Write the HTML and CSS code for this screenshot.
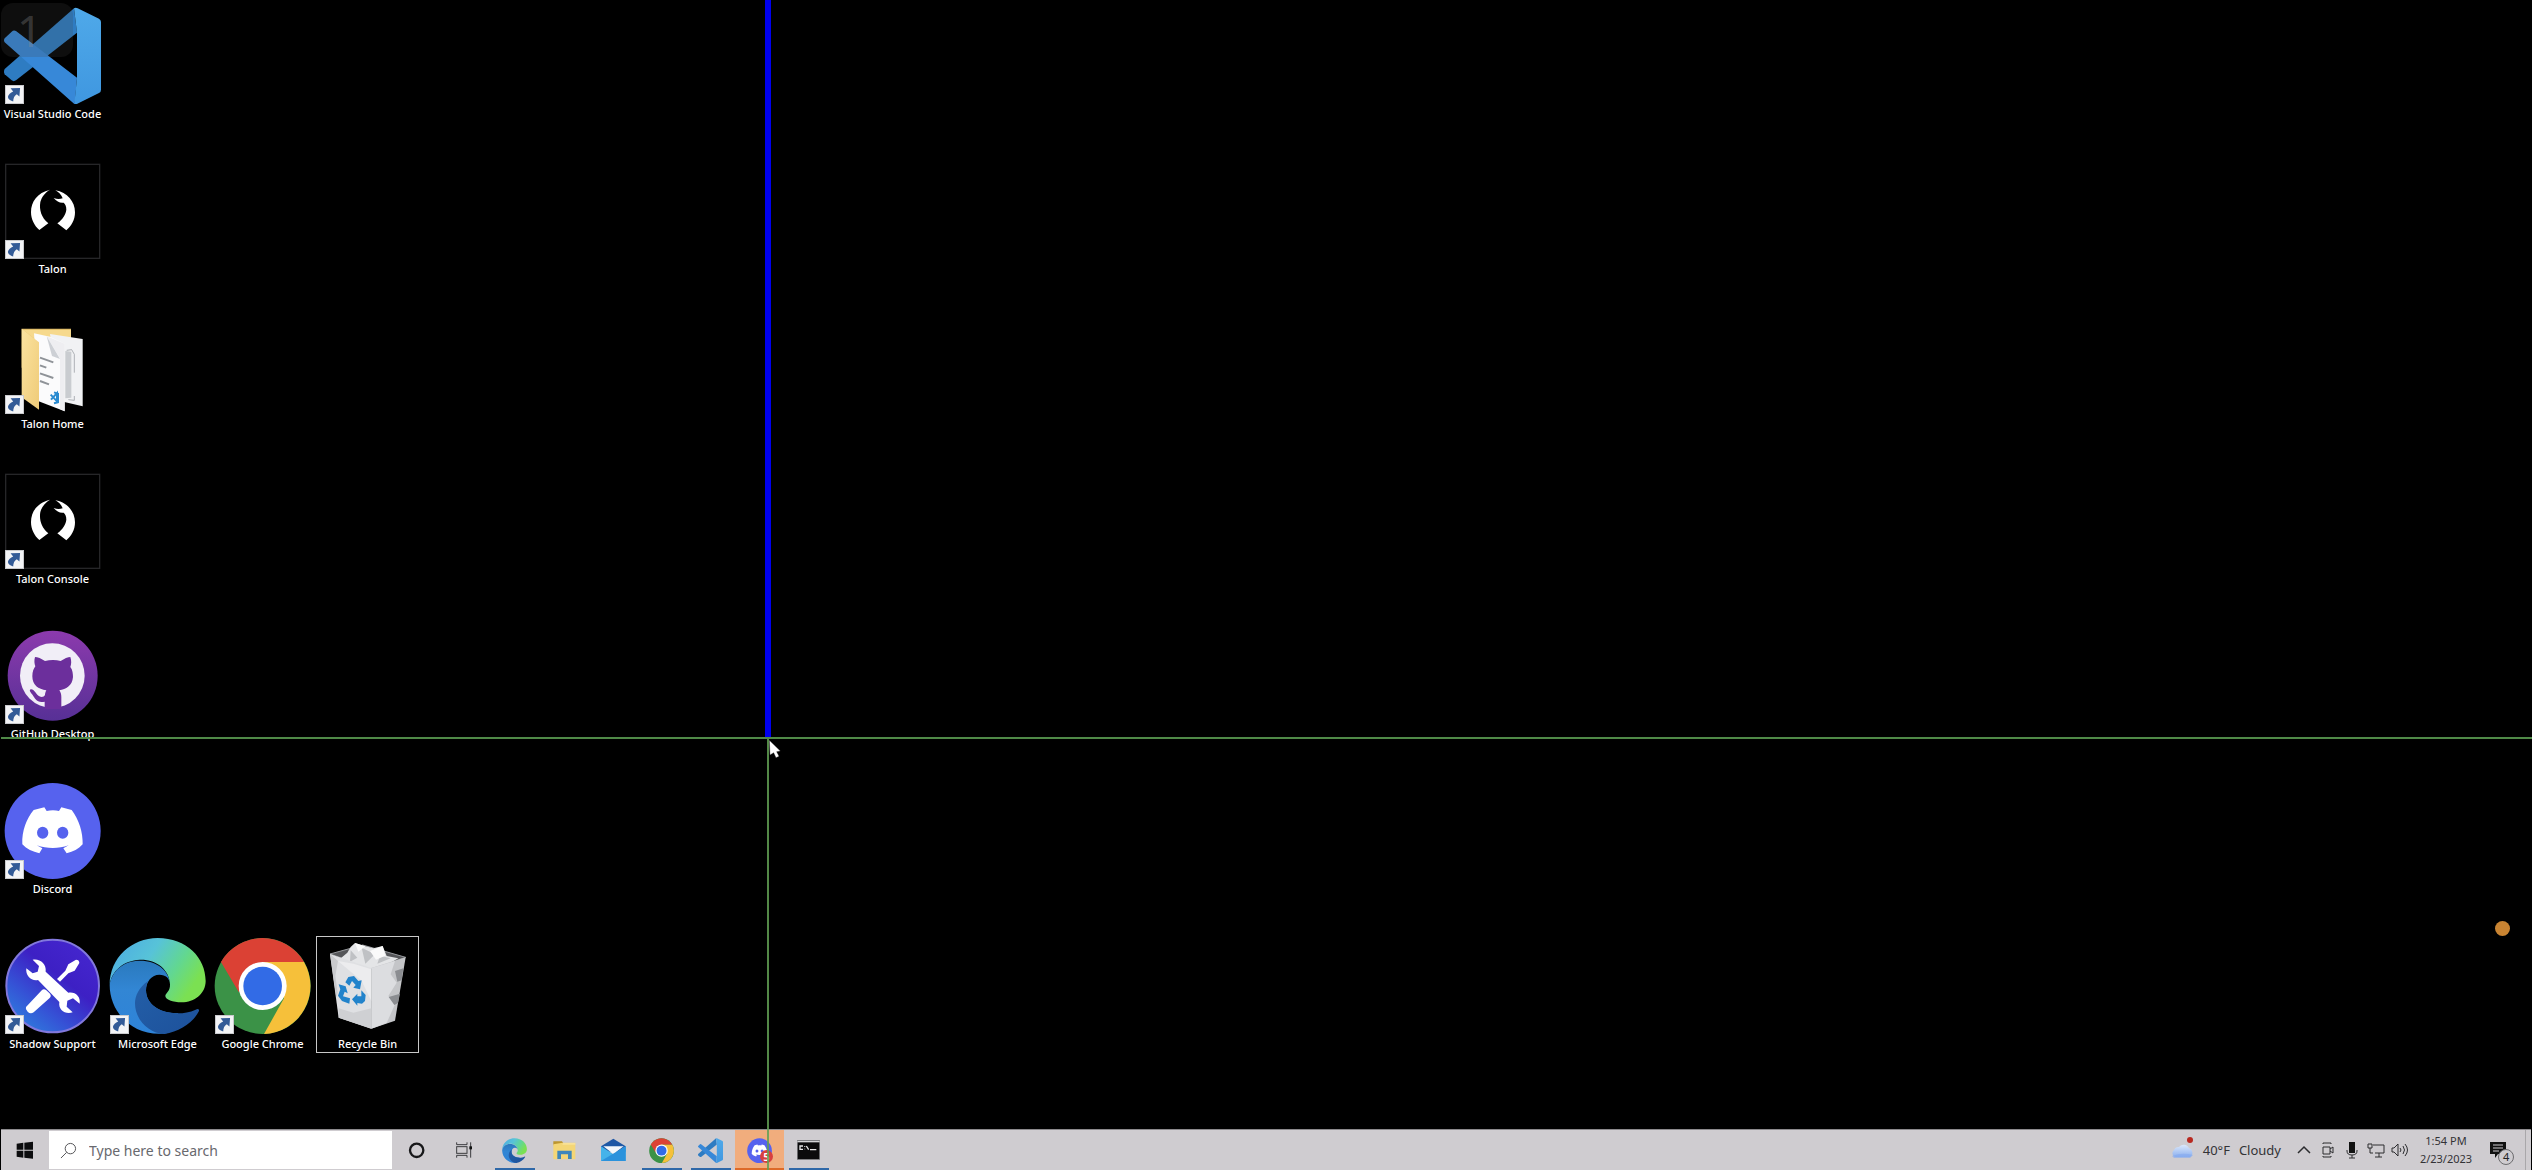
FILE: index.html
```html
<!DOCTYPE html>
<html lang="en">
<head>
<meta charset="utf-8">
<title>Desktop</title>
<link rel="stylesheet" href="styles.css">
</head>
<body>
<svg class="defs" aria-hidden="true">
  <defs>
    <linearGradient id="vsRight" x1="0" y1="0" x2="0" y2="1"><stop offset="0" stop-color="#4fa9e9"/><stop offset="1" stop-color="#3f97e0"/></linearGradient>
    <linearGradient id="edgeTop" x1="0" y1="0" x2="1" y2=".45"><stop offset="0" stop-color="#4ba9e4"/><stop offset=".45" stop-color="#57c3d8"/><stop offset=".75" stop-color="#62d791"/><stop offset="1" stop-color="#7be052"/></linearGradient>
    <linearGradient id="edgeMid" x1="0" y1="0" x2="0" y2="1"><stop offset="0" stop-color="#2a79bd"/><stop offset=".4" stop-color="#3286d4"/><stop offset="1" stop-color="#2e83d8"/></linearGradient>
    <linearGradient id="edgeLow" x1="0" y1="0" x2="1" y2="1"><stop offset="0" stop-color="#235fa8"/><stop offset="1" stop-color="#1d519b"/></linearGradient>
    <linearGradient id="ghBack" x1="0" y1="0" x2="0" y2="1"><stop offset="0" stop-color="#8c3aad"/><stop offset="1" stop-color="#573096"/></linearGradient>
    <linearGradient id="toolBack" x1="0" y1="1" x2=".8" y2="0"><stop offset="0" stop-color="#2c8fe0"/><stop offset=".35" stop-color="#3553d6"/><stop offset=".65" stop-color="#3d20c4"/><stop offset="1" stop-color="#4526cf"/></linearGradient>
    <linearGradient id="cloud" x1="0" y1="0" x2="0" y2="1"><stop offset="0" stop-color="#dbe8fb"/><stop offset="1" stop-color="#8db0ee"/></linearGradient>
    <linearGradient id="folder" x1="0" y1="0" x2="1" y2="1"><stop offset="0" stop-color="#fbe3a0"/><stop offset="1" stop-color="#efcb78"/></linearGradient>
    <symbol id="talon" viewBox="12 483 291 291">
      <rect x="17" y="490" width="282" height="282" fill="#000" stroke="#262628" stroke-width="4"/>
      <path fill="#fff" d="M150 566C112 575 93 602 93 633C93 655 103 674 118 687L145 667C124 650 117 626 121 603C125 587 136 574 150 566Z"/>
      <path fill="#fff" d="M166 568C202 574 225 602 225 634C225 657 214 675 199 688L172 667C188 655 197 642 199 626C199 615 196 609 191 605C181 607 170 602 161 591C172 595 180 594 188 592C184 581 176 574 166 568Z"/>
    </symbol>
    <symbol id="arrow" viewBox="0 0 58 58">
      <rect width="58" height="58" fill="#f3f4f6"/>
      <rect x="1.500" y="1.500" width="55" height="55" fill="none" stroke="#c9cacd" stroke-width="3"/>
      <path fill="#335b97" d="M17 10L46 9L44 35L36 28C29 32 25 40 25 50C14 47 9 42 9 36C10 29 17 24 25 20Z"/>
    </symbol>
    <symbol id="vscode" viewBox="12 18 291 291">
      <path fill="#2e7cc2" d="M14 204L222 22L231 95L48 238Q41 243 35 238L14 220Q10 212 14 204Z"/>
      <path fill="#3788d8" d="M48 90Q41 86 35 92L14 112Q10 118 14 124L224 310L231 230Z"/>
      <path fill="url(#vsRight)" d="M222 22Q227 19 233 22L297 53Q303 57 303 63V266Q303 273 297 276L232 308Q227 311 223 308L231 230V95Z"/>
    </symbol>
    <symbol id="edge" viewBox="327 48 291 291">
      <path fill="url(#edgeTop)" d="M329 192C329 110 395 51 473 51C560 51 617 110 617 180C617 218 583 244 545 244C518 244 496 236 496 225C496 217 511 212 510 190C508 145 470 115 420 116C370 118 335 150 329 192Z"/>
      <path fill="url(#edgeMid)" d="M329 192C335 150 370 119 420 119C472 119 508 150 510 190C509 172 498 161 478 161C455 161 438 182 438 208C438 250 480 279 535 277L500 337C400 350 329 275 329 192Z"/>
      <path fill="url(#edgeLow)" d="M444 180C416 200 405 225 405 247C405 295 445 337 493 339C540 331 580 305 597 270C598 264 593 262 587 266C570 274 550 277 535 277C480 277 438 250 438 208C438 197 440 188 444 180Z"/>
    </symbol>
    <symbol id="chrome" viewBox="642 48 291 291">
      <circle cx="788" cy="195" r="144" fill="#3b9247"/>
      <path fill="#f6c03a" d="M788 123H912A144 144 0 0 1 792 339L852 232Z"/>
      <path fill="#db4134" d="M663 123A144 144 0 0 1 912 123H788L716 213Z"/>
      <circle cx="788" cy="195" r="72" fill="#fff"/>
      <circle cx="788" cy="195" r="58" fill="#326be6"/>
    </symbol>
    <symbol id="discord" viewBox="12 513 291 291">
      <circle cx="158" cy="660" r="144" fill="#5662ee"/>
      <path fill="#fff" d="M101 597L133 589L140 600C152 597 166 597 177 600L184 589L215 597C237 625 249 665 248 700C235 714 220 722 200 727L190 712L206 703C175 714 142 714 110 703L127 712L118 727C98 722 80 714 67 700C65 660 80 622 101 597Z"/>
      <ellipse cx="128" cy="665" rx="17" ry="18" fill="#5662ee"/><ellipse cx="188" cy="665" rx="17" ry="18" fill="#5662ee"/>
    </symbol>
  </defs>
</svg>

<main class="desktop">
  <ul class="icons">
    <li class="c1 r1"><a class="icon" href="#"><span class="pic"><svg><use href="#vscode"/></svg><svg class="shortcut"><use href="#arrow"/></svg></span><span class="name">Visual Studio Code</span></a></li>
    <li class="c1 r2"><a class="icon" href="#"><span class="pic"><svg><use href="#talon"/></svg><svg class="shortcut"><use href="#arrow"/></svg></span><span class="name">Talon</span></a></li>
    <li class="c1 r3"><a class="icon" href="#"><span class="pic">
      <svg viewBox="12 48 291 291">
        <path fill="#e3c06c" d="M65 83H213V200H65Z"/>
        <path fill="#f6d98d" d="M70 87H213V110H100Z"/>
        <path fill="#f1f2f4" d="M150 99L248 114V316L180 300Z"/>
        <path fill="none" stroke="#8d9197" stroke-width="2" d="M200 148L215 146L223 160V215M223 285V298L205 296"/>
        <path fill="#c9ccd0" d="M196 150L214 152V290L196 292Z"/>
        <path fill="#fbfbfc" d="M102 97L150 107L194 128V331L114 300Z"/>
        <path fill="#eeeef1" d="M140 106L180 172V324L194 331V128Z"/>
        <path fill="#cdd0d5" d="M140 106L156 165L180 174Z"/>
        <path fill="url(#folder)" d="M65 83L117 124V326L65 289Z"/>
        <path stroke="#8f9398" stroke-width="6" d="M120 170L160 184M120 193L139 200M120 217L160 231M120 240L147 250"/>
        <path fill="none" stroke="#2a8bd0" stroke-width="6" d="M152 281L171 301V276L153 296M162 274L174 278V304L162 307"/>
      </svg><svg class="shortcut"><use href="#arrow"/></svg></span><span class="name">Talon Home</span></a></li>
    <li class="c1 r4"><a class="icon" href="#"><span class="pic"><svg><use href="#talon"/></svg><svg class="shortcut"><use href="#arrow"/></svg></span><span class="name">Talon Console</span></a></li>
    <li class="c1 r5"><a class="icon" href="#"><span class="pic">
      <svg viewBox="12 48 291 291">
        <circle cx="158" cy="194" r="135" fill="url(#ghBack)"/>
        <circle cx="157" cy="194" r="97" fill="#f1eef7"/>
        <path fill="#6c2f9c" d="M105 138C112 138 125 143 135 150C150 146 168 146 182 150C192 143 205 138 211 138C215 150 214 160 211 168C218 176 219 190 219 198C217 225 198 234 178 238C182 244 184 250 184 258V294H134V272C110 277 105 262 98 252C92 245 86 238 92 235C102 233 108 250 118 256C126 260 132 257 135 252C135 247 137 242 139 238C115 235 97 222 97 196C97 182 101 173 106 166C103 158 102 148 105 138Z"/>
      </svg><svg class="shortcut"><use href="#arrow"/></svg></span><span class="name">GitHub Desktop</span></a></li>
    <li class="c1 r6"><a class="icon" href="#"><span class="pic"><svg><use href="#discord"/></svg><svg class="shortcut"><use href="#arrow"/></svg></span><span class="name">Discord</span></a></li>
    <li class="c1 r7"><a class="icon" href="#"><span class="pic">
      <svg viewBox="12 48 291 291">
        <circle cx="158" cy="195" r="139" fill="url(#toolBack)" stroke="#8278dc" stroke-width="6"/>
        <path fill="#fff" d="M78 258L126 207Q132 202 139 208L150 218Q155 225 149 231L101 274Q91 280 83 272Q75 265 78 258Z"/>
        <path fill="#fff" d="M171 174L196 149L205 130L228 116Q238 116 238 126L224 149L205 157L180 182Z"/>
        <path fill="#fff" d="M98 116C120 112 140 128 137 152L205 215C225 211 243 226 239 248L219 232L202 239L200 257L218 274C196 282 174 266 178 243L114 177C94 181 76 165 79 142L98 157L113 152L117 135Z"/>
      </svg><svg class="shortcut"><use href="#arrow"/></svg></span><span class="name">Shadow Support</span></a></li>
    <li class="c2 r7"><a class="icon" href="#"><span class="pic"><svg><use href="#edge"/></svg><svg class="shortcut"><use href="#arrow"/></svg></span><span class="name">Microsoft Edge</span></a></li>
    <li class="c3 r7"><a class="icon" href="#"><span class="pic"><svg><use href="#chrome"/></svg><svg class="shortcut"><use href="#arrow"/></svg></span><span class="name">Google Chrome</span></a></li>
    <li class="c4 r7"><a class="icon selected" href="#"><span class="pic">
      <svg viewBox="957 48 291 291">
        <path fill="#555659" stroke="#96989c" stroke-width="3" d="M990 99L1088 72L1217 109L1116 143Z"/>
        <path fill="#e4e5e7" d="M1015 118L1042 95L1052 78L1065 66L1096 76L1120 82L1148 75L1160 105L1195 112L1150 138L1110 143L1040 128Z"/>
        <path fill="#bfc1c4" d="M1052 88L1072 110L1050 122ZM1085 80L1125 100L1096 128ZM1140 104L1172 112L1132 128Z"/>
        <path fill="#fafafa" d="M1065 66L1096 76L1075 92ZM1110 90L1148 75L1156 104L1128 116Z"/>
        <path fill="#dfe0e3" d="M990 99L1114 141V323L1016 290Z"/>
        <path fill="#c9cacd" d="M990 99L1014 120L1006 165L1013 215L1009 230Z"/>
        <path fill="#ececee" d="M1014 120L1060 128L1114 145V240L1085 180Z"/>
        <path fill="#c4c5c8" d="M1114 141L1217 109L1185 299L1114 323Z"/>
        <path fill="#dcdde0" d="M1114 141L1185 120L1172 160L1190 185L1165 225L1185 250L1160 306L1114 323Z"/>
        <path fill="#8b8d91" d="M1185 150L1210 142L1205 178L1192 182ZM1166 228L1200 218L1194 246L1183 252Z"/>
        <path fill="#cfd0d3" d="M1016 262L1060 275L1114 262V323L1016 290Z"/>
        <path fill="#2283cb" d="M1036 184L1045 168L1062 165L1075 180L1085 178L1080 205L1060 200L1067 192L1056 180L1048 194ZM1016 190L1037 196L1043 217L1034 212L1029 226L1050 232L1048 248L1026 240L1014 224L1021 205ZM1056 235L1072 218V226L1084 226V208L1097 222L1095 240L1086 248L1072 246V254Z"/>
      </svg></span><span class="name">Recycle Bin</span></a></li>
  </ul>

  <div class="badge-number">1</div>
  <div class="record-dot"></div>
</main>

<footer class="taskbar">
  <button class="task narrow" aria-label="Start"><svg viewBox="3 30 144 120"><path fill="#0c0c0e" d="M50 71L70 68V89H50ZM73 68L99 65V89H73ZM50 92H70V113L50 110ZM73 92H99V116L73 113Z"/></svg></button>
  <label class="search">
    <svg viewBox="0 0 18 18"><circle cx="11" cy="7" r="5.500"/><path d="M7 11L1 17"/></svg>
    <input type="text" placeholder="Type here to search" aria-label="Search">
  </label>
  <button class="task narrow" aria-label="Cortana"><svg viewBox="1176 30 144 120"><circle cx="1250" cy="91" r="20" fill="none" stroke="#18181a" stroke-width="7"/></svg></button>
  <button class="task narrow" aria-label="Task view"><svg viewBox="1320 30 144 120"><g fill="none" stroke="#3c3c3f" stroke-width="3"><path d="M1370 67V74H1401V67M1370 113V106H1401V113M1412 67V113"/><rect x="1370" y="80" width="31" height="20"/></g><rect x="1408" y="79" width="8" height="9" fill="#111"/></svg></button>
  <nav class="apps">
    <button class="task open" aria-label="Microsoft Edge"><svg class="app"><use href="#edge"/></svg></button>
    <button class="task" aria-label="File Explorer"><svg viewBox="177 30 147 120"><path fill="#bd962f" d="M220 64H246L250 70V76H220Z"/><path fill="#f4d676" d="M220 73L248 68H286V118H220Z"/><path fill="#f9e197" d="M250 69H286V74H247Z"/><path fill="#3d86bb" d="M232 117V92H275V117H264V103H243V117Z"/></svg></button>
    <button class="task" aria-label="Mail"><svg viewBox="324 30 147 120"><path fill="#1e57a5" d="M363 79L400 56L437 79V95H363Z"/><path fill="#45b3ea" d="M363 79L400 103L437 79V123H363Z"/><path fill="#f3f7fb" d="M370 79H431L400 102Z"/><path fill="#2b92dc" d="M363 123L437 79V123Z"/></svg></button>
    <button class="task open" aria-label="Google Chrome"><svg class="app"><use href="#chrome"/></svg></button>
    <button class="task open" aria-label="Visual Studio Code"><svg class="app"><use href="#vscode"/></svg></button>
    <button class="task alert" aria-label="Discord"><svg class="app"><use href="#discord"/></svg><span class="count">5</span></button>
    <button class="task open" aria-label="Command Prompt"><svg viewBox="912 30 147 120"><rect x="952" y="62" width="67" height="56" fill="#0b0b0c" stroke="#77787c" stroke-width="2"/><path stroke="#d5d5d7" stroke-width="4" d="M952 65H1019"/><path fill="none" stroke="#e8e8e8" stroke-width="4" d="M969 78H960V88H969M974 79V81M974 86V88M979 78L986 89M990 89H1009"/></svg></button>
  </nav>
  <div class="tray">
    <button class="weather"><svg viewBox="0 0 24 22"><path fill="url(#cloud)" d="M5 20A4 4 0 0 1 4 13A5 5 0 0 1 9 10A6 6 0 0 1 19 11A5 5 0 0 1 20 20Z"/><path fill="#86aaf0" opacity=".6" d="M2 19Q12 15 23 18L20 21H4Z"/><circle cx="20" cy="3" r="3" fill="#b8281f"/></svg><span>40°F</span><span>Cloudy</span></button>
    <button class="tool" aria-label="Show hidden icons"><svg viewBox="0 0 18 18"><path stroke-width="1.500" d="M3 12L9 6L15 12"/></svg></button>
    <button class="tool" aria-label="Meet now"><svg viewBox="0 0 18 18"><path d="M4 6H11V13H4ZM11 8L14 6V12L11 10M4 3V2H12V3M4 15V16H12V15"/></svg></button>
    <button class="tool" aria-label="Microphone"><svg viewBox="0 0 18 18"><path fill="#111" stroke="none" d="M6 1H12V12H6Z"/><path d="M4 9V10Q4 14 9 14T14 10V9M9 14V17M6 17H12"/></svg></button>
    <button class="tool" aria-label="Network"><svg viewBox="0 0 18 18"><path d="M6 4H17V12H8M12 12V16M8 16H15M1 3H5V7H1ZM3 7V12H6"/></svg></button>
    <button class="tool" aria-label="Volume"><svg viewBox="0 0 18 18"><path d="M1 7H3L7 3V15L3 11H1ZM9 7Q11 9 9 11M12 5Q15 9 12 13M14 3Q19 9 14 15"/></svg></button>
    <button class="clock"><span>1:54 PM</span><span>2/23/2023</span></button>
    <button class="notes" aria-label="Notifications"><svg viewBox="0 0 26 26"><path fill="#111" d="M1 2H17V14H9L6 18V14H1Z"/><path stroke="#cfccd0" stroke-width="1" d="M4 5H14M4 8H14M4 11H10"/><circle cx="17" cy="17" r="7.500" fill="#cfccd0" stroke="#6c6b6e"/></svg><span class="note-count">4</span></button>
    <button class="peek" aria-label="Show desktop"></button>
  </div>
</footer>

<div class="line blue"></div>
<div class="line across"></div>
<div class="line down"></div>
<svg class="cursor" viewBox="0 0 36 54"><path fill="#fff" stroke="#222" stroke-width="1" d="M1 1L34 33L23 35L30 49L21 53L14 38L3 45Z"/></svg>
</body>
</html>
```
FILE: styles.css
```css
* { box-sizing: border-box; }

body {
  margin: 0;
  min-height: 100vh;
  display: flex;
  flex-direction: column;
  position: relative;
  overflow: hidden;
  background: #000;
  color: #fff;
  font: 11px/16px "Noto Sans", "Open Sans", sans-serif;
}

button {
  margin: 0;
  padding: 0;
  border: 0;
  background: none;
  color: inherit;
  font: inherit;
}

svg { display: block; }
.defs { position: absolute; width: 0; height: 0; }

/* Desktop */
.desktop { flex: 1; position: relative; }

.icons {
  margin: 0;
  padding: 6px 0 0;
  list-style: none;
  display: grid;
  grid-template-columns: repeat(4, 105px);
  grid-auto-rows: 155px;
}
.c1 { grid-column: 1; }
.c2 { grid-column: 2; }
.c3 { grid-column: 3; }
.c4 { grid-column: 4; }
.r1 { grid-row: 1; }
.r2 { grid-row: 2; }
.r3 { grid-row: 3; }
.r4 { grid-row: 4; }
.r5 { grid-row: 5; }
.r6 { grid-row: 6; }
.r7 { grid-row: 7; }

.icon {
  display: flex;
  flex-direction: column;
  align-items: center;
  height: 117px;
  margin: 0 1px;
  border: 1px solid transparent;
  color: #fff;
  font-weight: 500;
  text-decoration: none;
  white-space: nowrap;
}
.icon.selected { border-color: #c8c8c8; }
.pic { position: relative; width: 97px; height: 97px; }
.pic svg { width: 97px; height: 97px; }
.pic .shortcut { position: absolute; left: 1px; bottom: 0; width: 19px; height: 19px; }
.name { margin-top: 2px; }

.badge-number {
  position: absolute;
  left: 1px;
  top: 3px;
  width: 72px;
  height: 54px;
  padding-left: 16px;
  border-radius: 12px;
  background: rgba(70, 70, 70, .2);
  color: rgba(150, 150, 150, .3);
  font-size: 44px;
  line-height: 54px;
}

.record-dot {
  position: absolute;
  right: 22px;
  bottom: 193px;
  width: 15px;
  height: 15px;
  border-radius: 50%;
  background: #c98432;
}

/* Pointer guides */
.line { position: absolute; }
.blue { left: 765px; top: 0; width: 6px; height: 738px; background: #0000ee; }
.across { left: 1px; right: 0; top: 737px; height: 2px; background: #4f8a47; }
.down { left: 767px; top: 739px; bottom: 0; width: 2px; background: rgba(98, 160, 84, .85); }
.cursor { position: absolute; left: 769px; top: 740px; width: 12px; height: 18px; }

/* Taskbar */
.taskbar {
  display: flex;
  align-items: stretch;
  height: 41px;
  margin: 0 1px;
  border-top: 1px solid #8c8a8d;
  background: #cfccd0;
  color: #333336;
}
.task {
  position: relative;
  display: flex;
  align-items: center;
  justify-content: center;
  width: 49px;
}
.task.narrow { width: 48px; }
.task svg { width: 100%; height: 40px; }
.task .app { width: 25px; height: 25px; }
.open { background: linear-gradient(#2f68a8, #2f68a8) center bottom / 40px 2px no-repeat; }
.alert { background: linear-gradient(#dd6a28, #dd6a28) center bottom / 100% 2px no-repeat #f1ad7d; }
.count {
  position: absolute;
  right: 11px;
  bottom: 7px;
  width: 13px;
  height: 13px;
  border-radius: 50%;
  background: #d8403f;
  color: #fff;
  font-weight: 600;
  line-height: 13px;
}

.search {
  display: flex;
  align-items: center;
  gap: 12px;
  width: 343px;
  margin: 1px 0;
  padding: 1px 11px 0;
  background: #fff;
}
.search svg { width: 17px; height: 17px; fill: none; stroke: #4c4c50; }
.search input {
  flex: 1;
  min-width: 0;
  padding: 0;
  border: 0;
  outline: 0;
  background: none;
  color: #333;
  font: 14px/20px "Noto Sans", "Open Sans", sans-serif;
}
.search input::placeholder { color: #68696e; opacity: 1; }

.apps { display: flex; margin-left: 2px; }

.tray { display: flex; align-items: center; margin-left: auto; }
.weather {
  display: flex;
  align-items: center;
  gap: 9px;
  margin-right: 11px;
  font-size: 13px;
}
.weather svg { width: 24px; height: 22px; margin-bottom: 4px; }
.tool { display: flex; justify-content: center; width: 24px; }
.tool svg { width: 18px; height: 18px; fill: none; stroke: #2c2c2f; stroke-width: 1; }
.clock { width: 68px; text-align: center; line-height: 18px; }
.clock span { display: block; }
.notes { position: relative; width: 45px; padding: 6px 0 0 9px; }
.notes svg { width: 26px; height: 26px; }
.note-count { position: absolute; left: 23px; top: 15px; color: #222; }
.peek { align-self: stretch; width: 6px; border-left: 1px solid #a9a7aa; }
```
